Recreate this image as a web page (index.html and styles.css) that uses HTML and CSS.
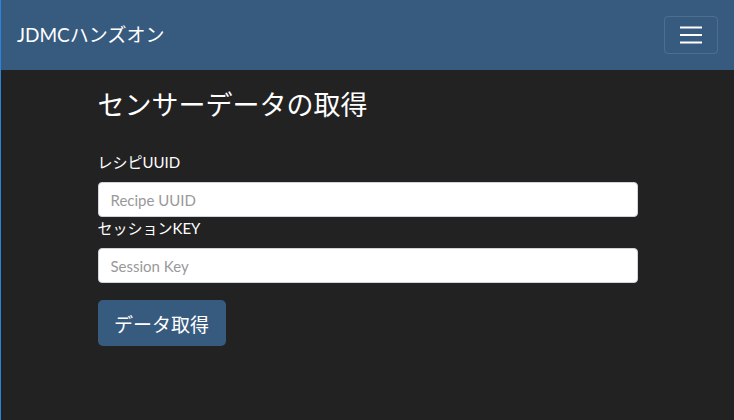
FILE: index.html
```html
<!DOCTYPE html>
<html lang="ja">
<head>
<meta charset="utf-8">
<title>JDMCハンズオン</title>
<link rel="stylesheet" href="styles.css">
</head>
<body>
<div class="page">
  <nav class="navbar">
    <span class="brand">JDMCハンズオン</span>
    <button class="toggler" type="button" aria-label="menu">
      <svg width="30" height="30" viewBox="0 0 30 30" aria-hidden="true">
        <path d="M4 7.5h22M4 15h22M4 22.5h22" stroke="#fff" stroke-width="2" stroke-linecap="butt"/>
      </svg>
    </button>
  </nav>
  <main class="container">
    <h3 class="title">センサーデータの取得</h3>
    <form class="form">
      <label class="label" for="uuid">レシピUUID</label>
      <input class="input" id="uuid" type="text" placeholder="Recipe UUID">
      <label class="label" for="key">セッションKEY</label>
      <input class="input" id="key" type="text" placeholder="Session Key">
      <button class="btn" type="button">データ取得</button>
    </form>
  </main>
</div>
</body>
</html>
```
FILE: styles.css
```css
* { box-sizing: border-box; }
html, body { margin: 0; padding: 0; }
body {
  background: #222;
  color: #fff;
  font-family: Lato, "Noto Sans CJK JP", sans-serif;
  font-size: 15px;
}
.page {
  min-height: 420px;
  border-left: 1px solid #2a84dc;
}
.navbar {
  height: 70px;
  background: #375a7f;
  display: flex;
  align-items: center;
  justify-content: space-between;
  padding: 0 16px 0 16px;
}
.brand {
  font-size: 19px;
  line-height: 24px;
  color: #fff;
}
.toggler {
  width: 54px;
  height: 38px;
  display: flex;
  align-items: center;
  justify-content: center;
  background: transparent;
  border: 1px solid rgba(255,255,255,0.12);
  border-radius: 4px;
  padding: 0;
}
.toggler svg { display: block; }
.container {
  width: 540px;
  margin: 0 auto;
  padding-top: 18px;
}
.title {
  margin: 0 0 29px 0;
  font-size: 27px;
  font-weight: 400;
  line-height: 34px;
}
.form {
  display: flex;
  flex-direction: column;
  align-items: flex-start;
}
.label {
  font-size: 15px;
  line-height: 22px;
  margin-bottom: 9px;
}
.input {
  width: 540px;
  height: 35px;
  margin: 0;
  border: 1px solid #ced4da;
  border-radius: 4px;
  background: #fff;
  padding: 0 12px;
  font-family: Lato, "Noto Sans CJK JP", sans-serif;
  font-size: 15px;
  color: #444;
}
.input::placeholder { color: #999; }
.btn {
  margin-top: 17px;
  width: 128px;
  height: 46px;
  background: #375a7f;
  color: #fff;
  border: none;
  border-radius: 5px;
  font-family: Lato, "Noto Sans CJK JP", sans-serif;
  font-size: 19px;
  padding: 0;
}
```
